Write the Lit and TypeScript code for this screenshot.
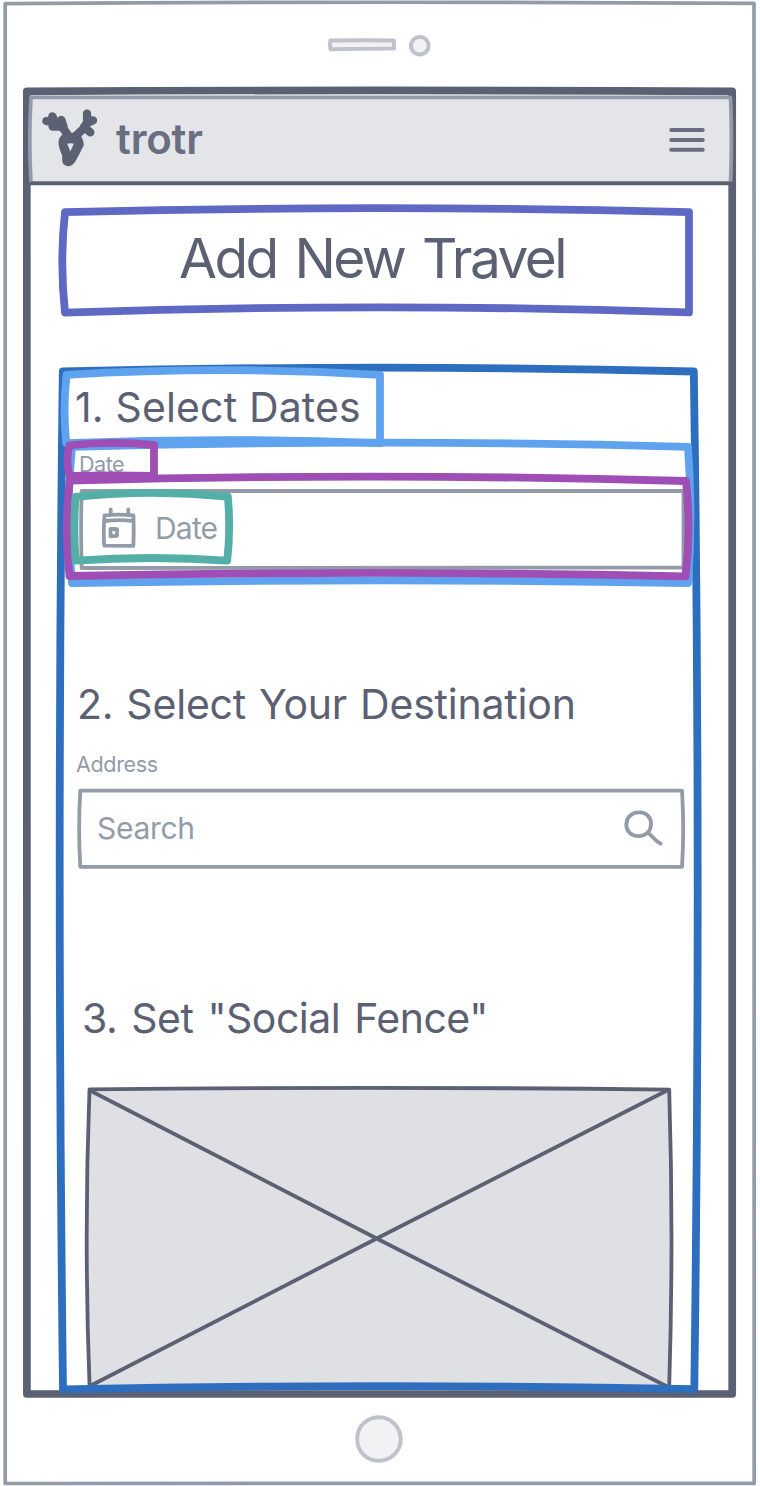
import { LitElement, html, svg, css } from "lit";
import { customElement, property } from "lit/decorators.js";

const ink = css`
  :host { display: block; }
  * { box-sizing: border-box; }
  svg { display: block; fill: none; overflow: visible; stroke-linecap: round; stroke-linejoin: round; }
`;

@customElement("trotr-header")
class TrotrHeader extends LitElement {
  static styles = [ink, css`
    .bar { position: relative; height: 96px; margin: 0 24px; padding: 0 31px 0 18px; display: flex; align-items: center; justify-content: space-between; }
    .back { position: absolute; inset: 0; }
    .panel { fill: #e4e5e9; stroke: #939ba9; stroke-width: 3.7; }
    .rule { stroke: #5c6073; stroke-width: 3.8; }
    .brand { position: relative; display: flex; align-items: center; gap: 18px; padding-top: 4px; }
    .antler { stroke: #5c6073; stroke-width: 25; }
    .head { fill: #5c6073; fill-rule: evenodd; stroke: #5c6073; stroke-width: 5; }
    .name { font: 600 42px/50px Inter, sans-serif; letter-spacing: -0.2px; color: #696e80; padding-top: 2px; }
    .menu { position: relative; padding-top: 8px; }
    .menu path { stroke: #696e80; stroke-width: 3.9; }
  `];
  render() {
    return html`<header class="bar">
      <svg class="back" width="712" height="96" viewBox="24 88 712 96">
        <path class="panel" d="M31 97.3Q380 95.8 730.5 97.3Q732.3 140 730.5 183L31 183Q28.6 140 31 97.3Z" />
        <path class="rule" d="M31 183.4Q380 182.4 731 183.4" />
      </svg>
      <div class="brand">
        <svg width="56" height="58" viewBox="126 326 168 174">
          <path class="antler" d="M139 362L170 368L192 387L206 408M157 348L168 372M158 379L185 379M184 359L191 380M261 340L262 365L250 385L226 408M279 360L262 368M271 396L252 380" />
          <path class="head" d="M180 415Q190 398 215 400Q240 398 245 418Q252 432 246 440L235 462L222 485Q215 495 204 495Q190 493 189 480L189 465Q178 440 178 425ZM198 428Q211 424 225 428L211 460Z" />
        </svg>
        <span class="name">trotr</span>
      </div>
      <svg class="menu" width="36" height="32" viewBox="669 128 36 24">
        <path d="M671.2 130H702.8M671.2 140H702.8M671.2 149.8H702.8" />
      </svg>
    </header>`;
  }
}

@customElement("form-field")
class FormField extends LitElement {
  @property() label = "";
  @property() placeholder = "";
  @property() kind = "date";
  static styles = [ink, css`
    .label { font: 400 21.6px/24px Inter, sans-serif; letter-spacing: -0.5px; color: #939ba9; height: 24px; }
    .box { position: relative; height: 82px; margin-top: 12px; width: 607px; display: flex; align-items: center; }
    .outline { position: absolute; inset: 0; }
    .stroke { stroke: #939ba9; stroke-width: 3.8; }
    .text { font: 400 30px/36px Inter, sans-serif; color: #939ba9; position: relative; }
    .date-label { padding-left: 2px; }
    .address-label { letter-spacing: -0.4px; margin-left: -1px; }
    .date { padding: 0 0 2px 24px; gap: 18px; }
    .date .text { letter-spacing: -0.8px; }
    .address { padding: 0 21px 2px 20px; justify-content: space-between; }
    .address .text { letter-spacing: -0.3px; }
    .icon { position: relative; }
  `];
  render() {
    const date = this.kind === "date";
    return html`
      <div class="label ${this.kind}-label">${this.label}</div>
      <div class="box ${this.kind}">
        <svg class="outline" width="607" height="82" viewBox=${date ? "77 488 607 82" : "77 788 607 82"}>
          ${date
            ? svg`<path class="stroke" d="M81.7 491Q380 489.8 683.5 491L683.5 567.5Q380 567 81.7 568Q80.5 530 81.7 491Z"/>`
            : svg`<path class="stroke" d="M80.3 790.6Q380 789.4 682 790.6Q684.4 829 682 866.9Q380 867.3 80.3 866.9Q78 829 80.3 790.6Z"/>`}
        </svg>
        ${date
          ? html`<svg class="icon" width="36" height="42" viewBox="101 507 36 42">
              <path class="stroke" d="M104.5 515.4Q119 513.8 133.4 515.4Q134 531 133.3 545.8L104.2 545.6Q103.2 531 104.5 515.4ZM104.5 521Q119 519.4 133.4 521M110.7 509.5V515M128.3 509.5V515M110.5 528.8L117 529.2V535.8L110.5 536.3Z" />
            </svg><span class="text">${this.placeholder}</span>`
          : html`<span class="text">${this.placeholder}</span>
            <svg class="icon" width="40" height="36" viewBox="623 809 40 36">
              <path class="stroke" d="M638.7 811.3C647 811 651.3 817 651 823.5C650.8 830.5 645.5 835.2 638.6 835.1C631 835 626.2 830 626.3 823.3C626.4 816.5 631.5 811.5 638.7 811.3M648.6 832.2C653 835.6 654.5 840 660.6 842.6" />
            </svg>`}
      </div>`;
  }
}

@customElement("image-placeholder")
class ImagePlaceholder extends LitElement {
  static styles = [ink, css`
    path { stroke: #5c6073; stroke-width: 3.8; }
    .fill { fill: #dee0e4; }
  `];
  render() {
    return html`<svg width="587" height="302" viewBox="85 1086 587 302">
      <path class="fill" d="M89.5 1089.4Q380 1086.3 669.2 1089.6Q673.8 1238 669.2 1387L89.6 1387Q83.8 1238 89.5 1089.4Z" />
      <path d="M90 1090.5L376.7 1238.5L668 1387M668 1090L376.7 1238.5L90 1386" />
    </svg>`;
  }
}

@customElement("app-root")
class AppRoot extends LitElement {
  static styles = [ink, css`
    :host { width: 760px; height: 1486px; position: relative; overflow: hidden; background: #fff; font-family: Inter, sans-serif; color: #5c6073; }
    .phone { position: absolute; inset: 0; }
    .notes { position: absolute; inset: 0; stroke-width: 7.8; }
    .page { position: relative; display: flex; flex-direction: column; }
    .speaker { height: 88px; padding: 32px 0 0 326px; }
    .case { stroke: #939ba9; stroke-width: 3.7; }
    .screen { stroke: #5c6073; stroke-width: 7.7; }
    .soft { stroke: #bfc1cb; stroke-width: 3.9; fill: #f1f2f4; }
    .title { margin: 24px 68px 0 60px; height: 108px; padding: 20px 8px 0 0; font-size: 55px; line-height: 60px; font-weight: 400; letter-spacing: -2.6px; word-spacing: 5px; text-align: center; white-space: nowrap; }
    .form { margin: 50px 60px 0 58px; height: 1022px; padding: 17px 0 0 19px; }
    .step { height: 297px; }
    h2 { margin: 0 0 21px; height: 48px; font-size: 41px; line-height: 48px; font-weight: 400; white-space: nowrap; }
    .dates h2 { letter-spacing: 0.15px; margin-left: -2px; }
    .place { height: 314px; }
    .place h2 { margin-bottom: 24px; letter-spacing: -0.2px; word-spacing: 1.6px; }
    .fence { padding-left: 6px; }
    .fence h2 { margin-bottom: 44px; margin-left: -1px; letter-spacing: -0.5px; word-spacing: 3px; }
    image-placeholder { padding-left: 2px; }
    .home { padding: 25px 0 0 353px; }
    .indigo { stroke: #5f69c4; }
    .blue { stroke: #2e6ebf; }
    .sky { stroke: #5fa3ef; }
    .purple { stroke: #9e4eb4; }
    .teal { stroke: #54afa7; }
  `];
  render() {
    return html`
      <svg class="phone" width="760" height="1486" viewBox="0 0 760 1486">
        <path class="case" d="M5.2 3.6Q380 1 754 3.4Q756.4 743 754.2 1483.3Q380 1482 5.2 1483.5Q3.6 743 5.2 3.6Z" />
        <path class="screen" d="M26.8 91.4Q380 89.4 732.2 91.4Q733.4 743 732.2 1394Q380 1393 26.9 1394Q25.1 743 26.8 91.4Z" />
      </svg>
      <main class="page">
        <div class="speaker">
          <svg width="108" height="28" viewBox="326 32 108 28">
            <path class="soft" d="M330.3 40.5Q360 39.9 393.9 40.5L394 48.6Q360 48.5 330.5 49.2Q329.5 45 330.3 40.5Z" />
            <circle class="soft" cx="419.8" cy="45.7" r="8.8" />
          </svg>
        </div>
        <trotr-header></trotr-header>
        <h1 class="title">Add New Travel</h1>
        <div class="form">
          <section class="step dates">
            <h2>1. Select Dates</h2>
            <form-field label="Date" placeholder="Date"></form-field>
          </section>
          <section class="step place">
            <h2>2. Select Your Destination</h2>
            <form-field kind="address" label="Address" placeholder="Search"></form-field>
          </section>
          <section class="fence">
            <h2>3. Set "Social Fence"</h2>
            <image-placeholder></image-placeholder>
          </section>
        </div>
        <div class="home">
          <svg width="52" height="52" viewBox="353 1413 52 52">
            <path class="soft" d="M378.5 1417.2C391 1417 400.5 1427 400.7 1439C401 1451 391 1460.8 378.6 1460.7C366 1460.5 357.2 1451 357.2 1439C357.2 1427 366 1417.5 378.5 1417.2Z" />
          </svg>
        </div>
      </main>
      <svg class="notes" width="760" height="1486" viewBox="0 0 760 1486">
        <path class="indigo" d="M65 212.2Q376 204.2 689 212.2L689 312.4Q376 302.2 65 312.6Q59.6 262 65 212.2Z" />
        <path class="blue" d="M62.8 371.5Q378 363.9 693.8 371.5C698.8 700 698.8 1050 694.3 1389.2Q378 1382.8 63 1389.4C58.8 1050 58.6 700 62.8 371.5Z" />
        <path class="sky" d="M66.6 374.8Q223 365.6 380 374.8L380 443.2Q223 437 66.3 443.2Q62.6 409 66.6 374.8Z" />
        <path class="sky" d="M72 446.8Q380 438.6 688 446.8Q693 515 688 583Q380 577.6 72 583.2Q65 515 72 446.8Z" />
        <path class="purple" d="M69.5 445.3Q112 440.5 154 445L154 476Q112 475 69.5 476Q65.2 460 69.5 445.3Z" />
        <path class="purple" d="M69.7 480.5Q380 472.5 686 481Q691.2 529 685.6 576.3Q380 569.8 69.5 576Q64 529 69.7 480.5Z" />
        <path class="teal" d="M75.6 496.8Q152 489.2 227.8 496.6Q230.8 529 227.2 560.6Q152 555.4 75.6 560.6Q73.2 529 75.6 496.8Z" />
      </svg>`;
  }
}
